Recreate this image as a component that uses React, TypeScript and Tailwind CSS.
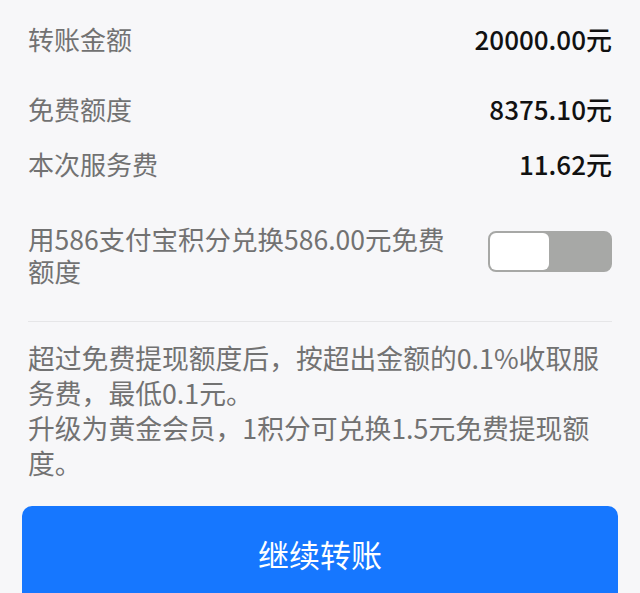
import React from "react";

const font = { fontFamily: '"Noto Sans CJK SC", "Noto Sans", sans-serif' };

const Row = ({ label, value, h }: { label: string; value: string; h: string }) => (
  <div className={`flex shrink-0 items-center justify-between ${h}`}>
    <span className="text-[26px] text-[#727272]">{label}</span>
    <span className="text-[26px] font-medium text-[#111111]">{value}</span>
  </div>
);

export default function App() {
  return (
    <div style={font} className="h-[593px] w-[640px] overflow-hidden bg-[#f7f7f9] px-[28px] flex flex-col">
      <Row label="转账金额" value="20000.00元" h="h-[76px]" />
      <Row label="免费额度" value="8375.10元" h="h-[64px]" />
      <Row label="本次服务费" value="11.62元" h="h-[46px]" />

      <div className="flex shrink-0 items-start justify-between pt-[37px]">
        <p className="w-[440px] text-[26.5px] leading-[32px] text-[#727272]">
          用586支付宝积分兑换586.00元免费额度
        </p>
        <button
          type="button"
          aria-label="切换"
          className="mt-[8px] flex h-[41px] w-[124px] items-stretch rounded-[8px] border-2 border-[#a7a8a6] bg-[#a7a8a6]"
        >
          <span className="w-[59px] rounded-[6px] bg-white" />
        </button>
      </div>

      <div className="mt-[34px] h-px shrink-0 bg-[#e6e6e8]" />

      <div className="mt-[18px] shrink-0 text-[26.8px] leading-[35px] text-[#727272]">
        <p>超过免费提现额度后，按超出金额的0.1%收取服务费，最低0.1元。</p>
        <p>升级为黄金会员，1积分可兑换1.5元免费提现额度。</p>
      </div>

      <button
        type="button"
        className="mx-[-6px] mt-[26px] h-[96px] shrink-0 rounded-[10px] bg-[#1677ff] text-[31px] text-white"
      >
        继续转账
      </button>
    </div>
  );
}
